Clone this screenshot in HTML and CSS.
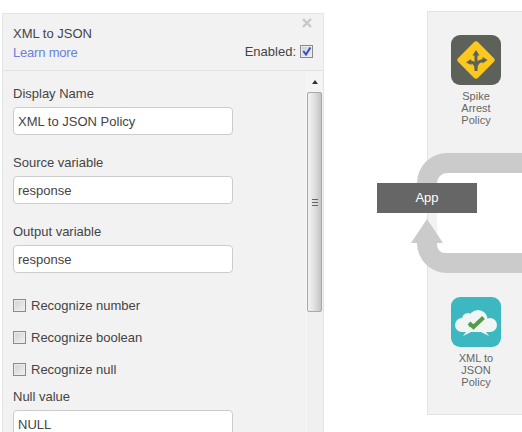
FILE: index.html
```html
<!DOCTYPE html>
<html lang="en">
  <head>
    <meta charset="UTF-8" />
    <title>XML to JSON Policy</title>
    <link rel="stylesheet" href="styles.css">
  </head>
  <body>
    <div class="page">
      <div class="panel">
        <div class="panel-head">
          <div class="head-text">
            <div class="panel-title">XML to JSON</div>
            <a class="learn-link" href="#">Learn more</a>
          </div>
          <div class="head-side">
            <svg class="close-icon" width="10" height="10" viewBox="0 0 10 10">
              <path d="M1 1 L9 9 M9 1 L1 9" stroke="#c8c8c8" stroke-width="2.4" />
            </svg>
            <label class="enabled">
              Enabled:
              <span class="check check-on">
                <svg width="11" height="11" viewBox="0 0 11 11">
                  <path d="M2.300 5 L5 8.500 L9.400 1.500" fill="none" stroke="#3a50b8" stroke-width="2" />
                </svg>
              </span>
            </label>
          </div>
        </div>
        <div class="panel-body">
          <form class="form">
            <div class="field">
              <label class="field-label">Display Name</label>
              <input class="text-input" type="text" value="XML to JSON Policy" />
            </div>
            <div class="field">
              <label class="field-label">Source variable</label>
              <input class="text-input" type="text" value="response" />
            </div>
            <div class="field">
              <label class="field-label">Output variable</label>
              <input class="text-input" type="text" value="response" />
            </div>
            <div class="checks">
              <label class="check-row"><span class="check"></span>Recognize number</label>
              <label class="check-row"><span class="check"></span>Recognize boolean</label>
              <label class="check-row"><span class="check"></span>Recognize null</label>
            </div>
            <div class="field field-null">
              <label class="field-label">Null value</label>
              <input class="text-input" type="text" value="NULL" />
            </div>
          </form>
          <div class="scrollbar">
            <div class="scroll-up"><span class="scroll-arrow"></span></div>
            <div class="scroll-thumb"><span class="scroll-grip"></span></div>
          </div>
        </div>
      </div>

      <div class="flow">
        <div class="flow-pane"></div>
        <svg class="loop" width="118" height="140" viewBox="0 0 118 140">
          <rect x="33" y="33" width="85" height="80" fill="#fff" />
          <path d="M118 13 H43 A30 30 0 0 0 13 43 V50 H33 V43 A10 10 0 0 1 43 33 H118 Z" fill="#cbcbcb" />
          <path d="M118 133 H43 A30 30 0 0 1 13 103 H7 L23 79 L39 103 H33 V105 A8 8 0 0 0 41 113 H118 Z" fill="#cbcbcb" />
        </svg>
        <div class="app-box">App</div>

        <div class="policy policy-spike">
          <svg class="policy-icon" width="50" height="50" viewBox="0 0 50 50">
            <rect width="50" height="50" rx="9" fill="#5c6259" />
            <rect x="11" y="11" width="28" height="28" rx="3" transform="rotate(45 25 25)" fill="#fcc81f" />
            <path d="M25 36 V18 M25 34 C25 29 22 26.500 18 27 M25 34 C25 28 28 25.500 33 25.500" fill="none" stroke="#5c6259" stroke-width="3" />
            <path d="M25 15 L28.500 20.500 H21.500 Z M15 27.500 L20 24 L20.500 30 Z M36.500 25 L31.500 22 L31.500 28.500 Z" fill="#5c6259" />
          </svg>
          <div class="policy-name">Spike<br>Arrest<br>Policy</div>
        </div>

        <div class="policy policy-xml">
          <svg class="policy-icon" width="50" height="50" viewBox="0 0 50 50">
            <rect width="50" height="50" rx="9" fill="#3eb8c0" />
            <g fill="#f1f5f3">
              <circle cx="11" cy="28" r="7" />
              <circle cx="17" cy="22" r="6" />
              <circle cx="27" cy="22.500" r="9.500" />
              <circle cx="39" cy="28" r="7" />
              <path d="M11 30 H39 V35 H35 L38 39 L30 35 H20 L12 39 L15 35 H11 Z" />
            </g>
            <path d="M18 26 L22.500 30 L32.500 20.500" fill="none" stroke="#5a9a4a" stroke-width="4" />
          </svg>
          <div class="policy-name">XML to<br>JSON<br>Policy</div>
        </div>
      </div>
    </div>
  </body>
</html>
```

FILE: styles.css
```css
html, body {
  margin: 0;
  height: 100%;
  overflow: hidden;
  background-color: #fff;
}
body {
  font-family: "Liberation Sans", Arial, sans-serif;
  font-size: 13px;
  color: #444;
}
.page {
  display: flex;
  height: 432px;
  padding-left: 2px;
  overflow: hidden;
}

/* left panel */
.panel {
  width: 322px;
  height: 460px;
  flex: none;
  margin-top: 13px;
  box-sizing: border-box;
  background-color: #f2f2f2;
  border: 1px solid #e4e4e4;
}
.panel-head {
  display: flex;
  justify-content: space-between;
  height: 56px;
  padding: 0 10px 0 10px;
  border-bottom: 1px solid #e2e2e2;
}
.head-text {
  padding-top: 12px;
}
.panel-title {
  line-height: 15px;
  margin-bottom: 4px;
}
.learn-link {
  display: block;
  line-height: 15px;
  color: #6a80e2;
  letter-spacing: -0.2px;
  text-decoration: none;
}
.head-side {
  display: flex;
  flex-direction: column;
  align-items: flex-end;
}
.close-icon {
  margin: 4px 1px 0 0;
}
.enabled {
  display: flex;
  align-items: center;
  gap: 4px;
  margin-top: 16px;
  line-height: 15px;
}
.check {
  display: block;
  box-sizing: border-box;
  width: 13px;
  height: 13px;
  flex: none;
  border: 1px solid #8a8a8a;
  background: linear-gradient(135deg, #d0d0d0, #f2f2f2);
  box-shadow: inset 0 0 0 1px #ececec;
}
.check-on {
  background: linear-gradient(135deg, #c4ccdc, #eef0f6);
}
.check svg {
  display: block;
}

.panel-body {
  display: flex;
  justify-content: space-between;
}
.form {
  padding: 15px 0 0 10px;
}
.field {
  margin-bottom: 20px;
}
.field-label {
  display: block;
  line-height: 15px;
  margin-bottom: 6px;
}
.text-input {
  display: block;
  box-sizing: border-box;
  width: 220px;
  height: 28px;
  padding: 0 4px;
  font: 13px "Liberation Sans", Arial, sans-serif;
  color: #444;
  background-color: #fff;
  border: 1px solid #ccc;
  border-radius: 4px;
  outline: none;
}
.checks {
  display: flex;
  flex-direction: column;
  gap: 17px;
  margin-top: 25px;
}
.check-row {
  display: flex;
  align-items: center;
  gap: 5px;
  line-height: 15px;
}
.field-null {
  margin-top: 12px;
}

.scrollbar {
  width: 16px;
  margin-right: 0;
  height: 400px;
  background-color: #f0f0f0;
  border-left: 1px solid #f6f6f6;
}
.scroll-up {
  display: flex;
  justify-content: center;
  align-items: center;
  height: 21px;
  background-color: #f4f4f4;
}
.scroll-arrow {
  width: 0;
  height: 0;
  border-left: 3.500px solid transparent;
  border-right: 3.500px solid transparent;
  border-bottom: 4px solid #333;
}
.scroll-thumb {
  display: flex;
  justify-content: center;
  align-items: center;
  box-sizing: border-box;
  width: 15px;
  height: 220px;
  background: linear-gradient(90deg, #f2f2f2, #e4e4e4 40%, #c4c4c4);
  border: 1px solid #a8a8a8;
  border-radius: 2px;
}
.scroll-grip {
  width: 6px;
  height: 5px;
  border-top: 1px solid #666;
  border-bottom: 1px solid #666;
  background: linear-gradient(#666, #666) center / 100% 1px no-repeat;
}

/* flow canvas on the right */
.flow {
  position: relative;
  flex: 1;
}
.flow-pane {
  position: absolute;
  left: 103px;
  top: 11px;
  width: 140px;
  height: 404px;
  box-sizing: border-box;
  background-color: #f2f2f2;
  border: 1px solid #e3e3e3;
}
.loop {
  position: absolute;
  left: 80px;
  top: 140px;
}
.app-box {
  position: absolute;
  left: 53px;
  top: 183px;
  width: 100px;
  height: 30px;
  line-height: 30px;
  text-align: center;
  color: #fff;
  background-color: #666;
}
.policy {
  position: absolute;
  left: 117px;
  width: 70px;
  text-align: center;
}
.policy-spike {
  top: 35px;
}
.policy-xml {
  top: 297px;
}
.policy-icon {
  display: block;
  margin: 0 auto 5px;
}
.policy-name {
  font-size: 11px;
  line-height: 12px;
  color: #666;
}
```
